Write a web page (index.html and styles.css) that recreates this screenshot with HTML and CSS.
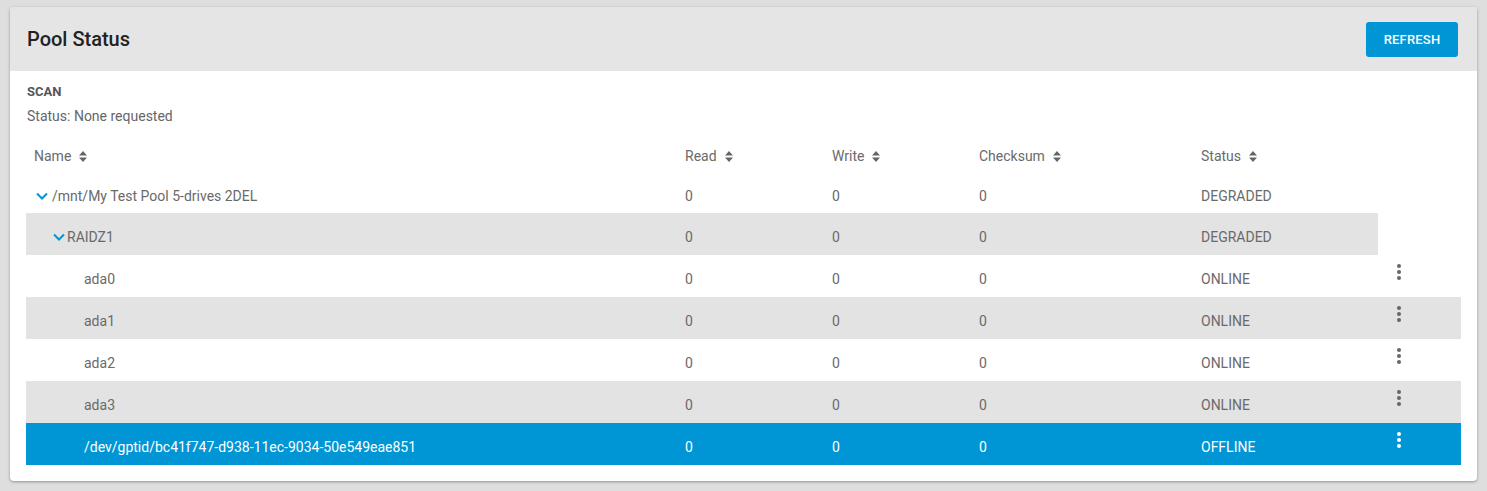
FILE: index.html
```html
<!DOCTYPE html>
<html lang="en">
<head>
    <meta charset="UTF-8">
    <title>Pool Status</title>
    <link rel="stylesheet" href="styles.css">
</head>
<body>
    <div class="card">
        <div class="card-header">
            <span class="title">Pool Status</span>
            <button class="btn">Refresh</button>
        </div>
        <div class="card-body">
            <div class="scan">
                <div class="scan-label">SCAN</div>
                <div class="scan-status">Status: None requested</div>
            </div>

            <div class="table">
                <div class="row head">
                    <div class="cell">Name <svg class="sort" viewBox="0 0 8 11"><path d="M4 0L8 4.5H0Z M4 11L8 6.5H0Z"/></svg></div>
                    <div class="cell">Read <svg class="sort" viewBox="0 0 8 11"><path d="M4 0L8 4.5H0Z M4 11L8 6.5H0Z"/></svg></div>
                    <div class="cell">Write <svg class="sort" viewBox="0 0 8 11"><path d="M4 0L8 4.5H0Z M4 11L8 6.5H0Z"/></svg></div>
                    <div class="cell">Checksum <svg class="sort" viewBox="0 0 8 11"><path d="M4 0L8 4.5H0Z M4 11L8 6.5H0Z"/></svg></div>
                    <div class="cell">Status <svg class="sort" viewBox="0 0 8 11"><path d="M4 0L8 4.5H0Z M4 11L8 6.5H0Z"/></svg></div>
                    <div class="cell"></div>
                </div>

                <div class="row first">
                    <div class="cell name lvl0"><svg class="chev" viewBox="0 0 12 8"><path d="M1 1.5L6 6.5L11 1.5"/></svg>/mnt/My Test Pool 5-drives 2DEL</div>
                    <div class="cell">0</div>
                    <div class="cell">0</div>
                    <div class="cell">0</div>
                    <div class="cell">DEGRADED</div>
                </div>

                <div class="row alt">
                    <div class="cell name lvl1"><svg class="chev" viewBox="0 0 12 8"><path d="M1 1.5L6 6.5L11 1.5"/></svg>RAIDZ1</div>
                    <div class="cell">0</div>
                    <div class="cell">0</div>
                    <div class="cell">0</div>
                    <div class="cell">DEGRADED</div>
                </div>

                <div class="row">
                    <div class="cell name lvl2">ada0</div>
                    <div class="cell">0</div>
                    <div class="cell">0</div>
                    <div class="cell">0</div>
                    <div class="cell">ONLINE</div>
                    <div class="cell actions"><span class="kebab"><i></i><i></i><i></i></span></div>
                </div>

                <div class="row alt">
                    <div class="cell name lvl2">ada1</div>
                    <div class="cell">0</div>
                    <div class="cell">0</div>
                    <div class="cell">0</div>
                    <div class="cell">ONLINE</div>
                    <div class="cell actions"><span class="kebab"><i></i><i></i><i></i></span></div>
                </div>

                <div class="row">
                    <div class="cell name lvl2">ada2</div>
                    <div class="cell">0</div>
                    <div class="cell">0</div>
                    <div class="cell">0</div>
                    <div class="cell">ONLINE</div>
                    <div class="cell actions"><span class="kebab"><i></i><i></i><i></i></span></div>
                </div>

                <div class="row alt">
                    <div class="cell name lvl2">ada3</div>
                    <div class="cell">0</div>
                    <div class="cell">0</div>
                    <div class="cell">0</div>
                    <div class="cell">ONLINE</div>
                    <div class="cell actions"><span class="kebab"><i></i><i></i><i></i></span></div>
                </div>

                <div class="row selected">
                    <div class="cell name lvl2">/dev/gptid/bc41f747-d938-11ec-9034-50e549eae851</div>
                    <div class="cell">0</div>
                    <div class="cell">0</div>
                    <div class="cell">0</div>
                    <div class="cell">OFFLINE</div>
                    <div class="cell actions"><span class="kebab"><i></i><i></i><i></i></span></div>
                </div>
            </div>
        </div>
    </div>
</body>
</html>
```

FILE: styles.css
```css
body {
    margin: 0;
    padding: 7px 10px 10px 10px;
    background: #dedede;
    font-family: Roboto, "Liberation Sans", sans-serif;
    color: #666;
}

.card {
    background: #fff;
    border-radius: 4px;
    box-shadow: 0 1px 3px rgba(0, 0, 0, 0.35);
    overflow: hidden;
}

.card-header {
    height: 64px;
    background: #e5e5e5;
    display: flex;
    justify-content: space-between;
    align-items: center;
    padding: 0 19px 0 17px;
}

.title {
    font-size: 20px;
    font-weight: 500;
    color: #222;
}

.btn {
    background: #0095d5;
    color: #fff;
    border: none;
    border-radius: 3px;
    width: 92px;
    height: 35px;
    font-family: inherit;
    font-size: 13px;
    font-weight: 500;
    text-transform: uppercase;
    letter-spacing: 0.2px;
    margin-top: 1px;
}

.card-body {
    padding: 13px 16px 16px 16px;
}

.scan {
    padding-left: 1px;
    font-size: 14px;
}
.scan-label {
    font-size: 13px;
    font-weight: 700;
    color: #555;
    line-height: 16px;
}
.scan-status {
    margin-top: 8px;
    line-height: 16px;
}

.table {
    margin-top: 13px;
    font-size: 14px;
}

.row {
    display: grid;
    grid-template-columns: 651px 147px 147px 222px 185px 83px;
    height: 42px;
}
.row.head {
    height: 37px;
}
.row.first {
    height: 39px;
}

.cell {
    display: flex;
    align-items: center;
    padding: 6px 8px 0 8px;
    white-space: nowrap;
    color: #6a6a6a;
}
.row.head .cell {
    padding-top: 1px;
}
.row.first .cell {
    padding-top: 4px;
}

.row.alt .cell {
    background: #e3e3e3;
}
.row.selected .cell {
    background: #0095d5;
    color: #fff;
}

.sort {
    width: 8px;
    height: 11px;
    margin-left: 8px;
    fill: #666;
}

.chev {
    width: 12px;
    height: 8px;
    margin-right: 4px;
    fill: none;
    stroke: #0095d5;
    stroke-width: 2;
}

.name.lvl0 { padding-left: 10px; }
.name.lvl1 { padding-left: 27px; }
.name.lvl1 .chev { margin-right: 2px; }
.name.lvl2 { padding-left: 58px; }

.actions {
    padding: 0 0 0 17px;
    align-items: flex-start;
}
.kebab {
    display: flex;
    flex-direction: column;
    gap: 2px;
    padding: 9px 2px;
}
.kebab i {
    width: 4px;
    height: 4px;
    border-radius: 50%;
    background: #666;
}
.row.selected .kebab i {
    background: #fff;
}
```
